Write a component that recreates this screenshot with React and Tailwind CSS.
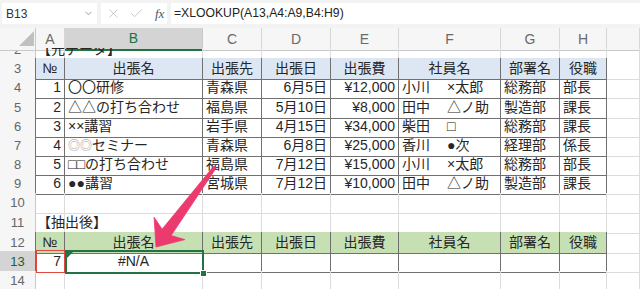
import React from "react";
import { X, Check, ChevronDown } from "lucide-react";

const GRID = "grid grid-cols-[36px_29px_138px_59px_69px_68px_102px_59px_47px_33px]";
const FONT = "font-['Liberation_Sans','Noto_Sans_CJK_JP',sans-serif]";

const inTable = (r, c) => c >= 1 && c <= 8 && ((r >= 3 && r <= 9) || (r >= 12 && r <= 13));

const HEAD = ["№", "出張名", "出張先", "出張日", "出張費", "社員名", "部署名", "役職"];

const Name = ({ a, b }) => (
  <span className="flex">
    <span className="inline-block w-[45px]">{a}</span>
    <span>{b}</span>
  </span>
);

const DATA = [
  [1, "〇〇研修", "青森県", "6月5日", "¥12,000", <Name a="小川" b="×太郎" />, "総務部", "部長"],
  [2, "△△の打ち合わせ", "福島県", "5月10日", "¥8,000", <Name a="田中" b="△ノ助" />, "製造部", "課長"],
  [3, <span>××講習</span>, "岩手県", "4月15日", "¥34,000", <Name a="柴田" b="□" />, "総務部", "課長"],
  [
    4,
    <span>
      <span className="text-[12px] text-[#9a9a9a]">◎◎</span>セミナー
    </span>,
    "青森県",
    "6月8日",
    "¥25,000",
    <Name a="香川" b="●次" />,
    "経理部",
    "係長",
  ],
  [5, "□□の打ち合わせ", "福島県", "7月12日", "¥15,000", <Name a="小川" b="×太郎" />, "総務部", "部長"],
  [6, "●●講習", "宮城県", "7月12日", "¥10,000", <Name a="田中" b="△ノ助" />, "製造部", "課長"],
];

const ALIGN = ["", "justify-end", "justify-start", "justify-start", "justify-end", "justify-end", "justify-start", "justify-start", "justify-start", ""];

const ROWS = [
  { r: 3, h: "h-[19px]" },
  { r: 4, h: "h-[20px]" },
  { r: 5, h: "h-[19px]" },
  { r: 6, h: "h-[19px]" },
  { r: 7, h: "h-[19px]" },
  { r: 8, h: "h-[19px]" },
  { r: 9, h: "h-[20px]" },
  { r: 10, h: "h-[19px]" },
  { r: 11, h: "h-[20px]" },
  { r: 12, h: "h-[19px]" },
  { r: 13, h: "h-[20px]" },
  { r: 14, h: "h-[20px]" },
];

function content(r, c) {
  if (r === 2 && c === 1) return { node: "【元データ】", j: "justify-start", pad: "pl-[1px]" };
  if (r === 11 && c === 1) return { node: "【抽出後】", j: "justify-start", pad: "pl-[1px]" };
  if ((r === 3 || r === 12) && c >= 1 && c <= 8) return { node: HEAD[c - 1], j: "justify-center" };
  if (r >= 4 && r <= 9 && c >= 1 && c <= 8) return { node: DATA[r - 4][c - 1], j: ALIGN[c] };
  if (r === 13 && c === 1) return { node: "7", j: "justify-end" };
  if (r === 13 && c === 2) return { node: "#N/A", j: "justify-center" };
  return { node: null, j: "justify-start" };
}

function Cell({ r, c }) {
  if (c === 0) {
    const sel = r === 13;
    return (
      <div
        className={`box-border border-r border-b flex items-center justify-center text-[13px] ${
          sel ? "bg-[#d4d4d4] text-[#1e5e37]" : "bg-[#f6f6f6] text-[#666]"
        } ${inTable(r, 1) ? "border-r-[#707070]" : "border-r-[#c9c9c9]"} border-b-[#e2e2e2]`}
      >
        {r}
      </div>
    );
  }
  const rd = inTable(r, c) || inTable(r, c + 1);
  const bd = inTable(r, c) || inTable(r + 1, c);
  const { node, j, pad } = content(r, c);
  let bg = "";
  if (r === 3 && c >= 1 && c <= 8) bg = "bg-[#dde7f3]";
  if (r === 12 && c >= 1 && c <= 8) bg = "bg-[#c6e0b4]";
  return (
    <div
      className={`relative box-border border-r border-b flex items-center whitespace-nowrap text-[#262626] text-[14px] ${
        pad || "px-[3px]"
      } ${j} ${bg} ${rd ? "border-r-[#707070]" : "border-r-[#dcdcdc]"} ${bd ? "border-b-[#707070]" : "border-b-[#dcdcdc]"}`}
    >
      {node}
      {r === 13 && c === 1 && (
        <div className="absolute -top-[1px] left-0 -right-[1px] -bottom-[1px] border border-[#e0473f] z-10" />
      )}
      {r === 13 && c === 2 && (
        <>
          <div className="absolute -top-[1px] left-0 -right-[2px] -bottom-[2px] border-2 border-[#217346] z-10" />
          <div className="absolute top-[1px] left-[2px] w-0 h-0 border-t-[6px] border-r-[6px] border-t-[#217346] border-r-transparent z-10" />
          <div className="absolute -right-[5px] -bottom-[5px] w-[7px] h-[7px] bg-[#217346] border border-white z-20" />
        </>
      )}
    </div>
  );
}

function Row({ r, h }) {
  return (
    <div className={`${GRID} ${h}`}>
      {Array.from({ length: 10 }, (_, c) => (
        <Cell key={c} r={r} c={c} />
      ))}
    </div>
  );
}

export default function App() {
  const letters = ["A", "B", "C", "D", "E", "F", "G", "H", ""];
  return (
    <div className={`relative w-[640px] h-[289px] overflow-hidden bg-white ${FONT}`}>
      {/* formula bar */}
      <div className="flex h-[28px] bg-[#f3f3f3] pt-[3px] pb-[4px] gap-[4px]">
        <div className="w-[95px] ml-[2px] bg-white flex items-center justify-between pl-[4px] pr-[3px] text-[12px] text-[#333]">
          <span>B13</span>
          <ChevronDown size={11} strokeWidth={1.5} className="text-[#777]" />
        </div>
        <div className="w-[66px] bg-white flex items-center gap-[8px] pl-[5px] text-[#b5b5b5]">
          <X size={15} strokeWidth={1.2} />
          <Check size={15} strokeWidth={1.2} />
          <span className="ml-[3px] font-['Liberation_Serif',serif] italic text-[13px] text-[#555]">fx</span>
        </div>
        <div className="flex-1 bg-white flex items-center pl-[3px] text-[12.2px] text-[#222]">
          =XLOOKUP(A13,A4:A9,B4:H9)
        </div>
      </div>
      {/* column headers */}
      <div className={`${GRID} h-[20px]`}>
        <div className="relative box-border border-r border-b border-r-[#c9c9c9] border-b-[#c9c9c9] bg-[#f6f6f6]">
          <svg className="absolute left-[19px] top-[3px]" width="15" height="15" viewBox="0 0 15 15">
            <polygon points="15,0 15,15 0,15" fill="#c0c0c0" />
          </svg>
        </div>
        {letters.map((l, i) =>
          l === "B" ? (
            <div
              key={i}
              className="box-border border-r border-b-2 border-r-[#c9c9c9] border-b-[#217346] bg-[#d4d4d4] flex items-center justify-center text-[14px] text-[#217346]"
            >
              {l}
            </div>
          ) : (
            <div
              key={i}
              className="box-border border-r border-b border-r-[#d6d6d6] border-b-[#c9c9c9] bg-[#f6f6f6] flex items-center justify-center text-[14px] text-[#6a6a6a]"
            >
              {l}
            </div>
          )
        )}
      </div>
      {/* row 2 partially visible (scrolled) */}
      <div className="h-[10px] overflow-hidden">
        <div className="-mt-[9px]">
          <Row r={2} h="h-[19px]" />
        </div>
      </div>
      {ROWS.map((row) => (
        <Row key={row.r} r={row.r} h={row.h} />
      ))}
      {/* annotation arrow */}
      <svg className="absolute left-0 top-0 pointer-events-none" width="640" height="289" viewBox="0 0 640 289">
        <polygon
          points="156,247 184.9,239.6 171.1,235.6 216.2,167.9 213.8,166.1 162.1,229.2 154.1,217.2"
          fill="#ec3a6e"
          stroke="#ec3a6e"
          strokeWidth="0.8"
          strokeLinejoin="round"
        />
      </svg>
    </div>
  );
}
